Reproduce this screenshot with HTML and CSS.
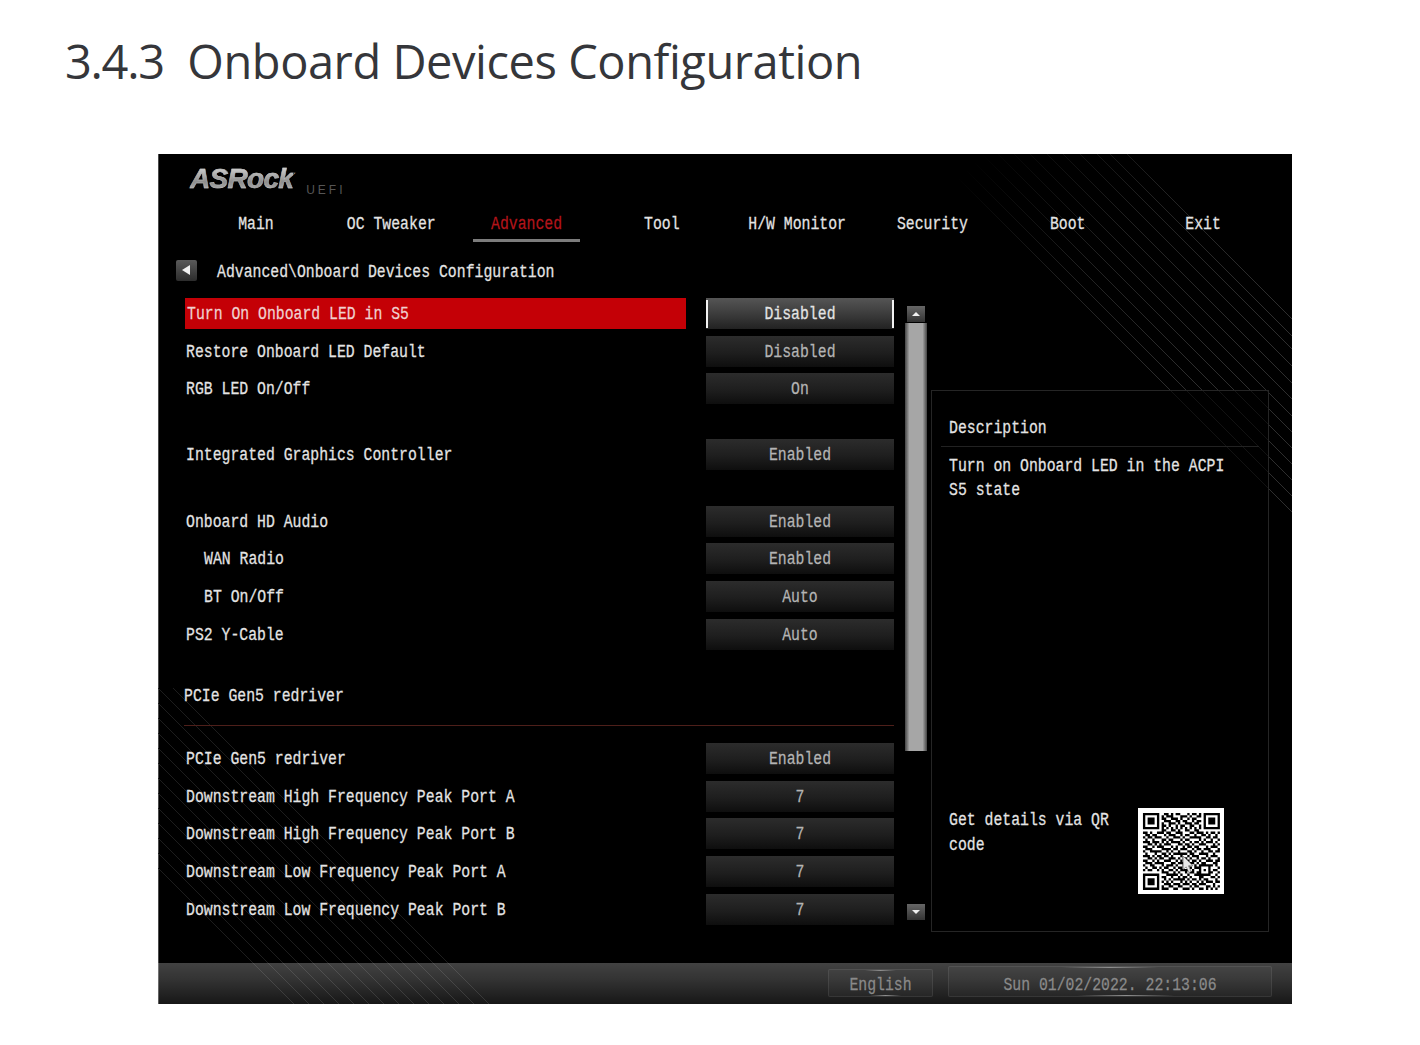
FILE: index.html
```html
<!DOCTYPE html>
<html lang="en">
<head>
    <meta charset="UTF-8">
    <title>3.4.3 Onboard Devices Configuration</title>
    <link rel="stylesheet" href="styles.css">
</head>
<body>
    <h1 class="page-title"><span class="num">3.4.3</span>&nbsp; Onboard Devices Configuration</h1>

    <div class="screen">
        <svg class="stripes" width="1134" height="850" viewBox="0 0 1134 850">
            <defs>
                <linearGradient id="fade" gradientUnits="userSpaceOnUse" x1="780" y1="40" x2="1000" y2="260">
                    <stop offset="0" stop-color="#000"/>
                    <stop offset="0.5" stop-color="#222"/>
                    <stop offset="1" stop-color="#2e2e2e"/>
                </linearGradient>
            </defs>
            <g stroke="url(#fade)" stroke-width="1" fill="none">
                <path d="M969 0L1134 165"/>
                <path d="M952 0L1134 182"/>
                <path d="M939 0L1134 195"/>
                <path d="M922 0L1134 212"/>
                <path d="M905 0L1134 229"/>
                <path d="M889 0L1134 245"/>
                <path d="M872 0L1134 262"/>
                <path d="M856 0L1134 278"/>
                <path d="M840 0L1134 294"/>
                <path d="M824 0L1134 310"/>
                <path d="M808 0L1134 326"/>
                <path d="M792 0L1134 342"/>
                <path d="M776 0L1134 358"/>
            </g>
            <g stroke="#1d1d1d" stroke-width="1" fill="none">
                <path d="M15 534L331 850"/>
                <path d="M0 534L316 850"/>
                <path d="M0 549L301 850"/>
                <path d="M0 564L286 850"/>
                <path d="M0 579L271 850"/>
                <path d="M0 594L256 850"/>
                <path d="M0 609L241 850"/>
                <path d="M0 624L226 850"/>
                <path d="M0 639L211 850"/>
                <path d="M0 654L196 850"/>
                <path d="M0 669L181 850"/>
                <path d="M0 684L166 850"/>
                <path d="M0 699L151 850"/>
                <path d="M0 714L136 850"/>
            </g>
        </svg>

        <div class="brand">
            <span class="logo">ASRock</span>
            <span class="uefi">UEFI</span>
        </div>

        <nav class="tabs">
            <span class="tab"><span class="txt">Main</span></span>
            <span class="tab"><span class="txt">OC Tweaker</span></span>
            <span class="tab active"><span class="txt">Advanced</span></span>
            <span class="tab"><span class="txt">Tool</span></span>
            <span class="tab"><span class="txt">H/W Monitor</span></span>
            <span class="tab"><span class="txt">Security</span></span>
            <span class="tab"><span class="txt">Boot</span></span>
            <span class="tab"><span class="txt">Exit</span></span>
        </nav>

        <div class="crumb">
            <span class="back"></span>
            <span class="txt">Advanced\Onboard Devices Configuration</span>
        </div>

        <div class="body">
            <div class="list">
                <div class="row selected"><span class="label"><span class="txt">Turn On Onboard LED in S5</span></span><span class="value"><span class="txt">Disabled</span></span></div>
                <div class="row"><span class="label"><span class="txt">Restore Onboard LED Default</span></span><span class="value"><span class="txt">Disabled</span></span></div>
                <div class="row"><span class="label"><span class="txt">RGB LED On/Off</span></span><span class="value"><span class="txt">On</span></span></div>
                <div class="row spaced"><span class="label"><span class="txt">Integrated Graphics Controller</span></span><span class="value"><span class="txt">Enabled</span></span></div>
                <div class="row spaced"><span class="label"><span class="txt">Onboard HD Audio</span></span><span class="value"><span class="txt">Enabled</span></span></div>
                <div class="row sub"><span class="label"><span class="txt">WAN Radio</span></span><span class="value"><span class="txt">Enabled</span></span></div>
                <div class="row sub"><span class="label"><span class="txt">BT On/Off</span></span><span class="value"><span class="txt">Auto</span></span></div>
                <div class="row"><span class="label"><span class="txt">PS2 Y-Cable</span></span><span class="value"><span class="txt">Auto</span></span></div>
                <div class="section"><span class="txt">PCIe Gen5 redriver</span></div>
                <div class="row"><span class="label"><span class="txt">PCIe Gen5 redriver</span></span><span class="value"><span class="txt">Enabled</span></span></div>
                <div class="row"><span class="label"><span class="txt">Downstream High Frequency Peak Port A</span></span><span class="value"><span class="txt">7</span></span></div>
                <div class="row"><span class="label"><span class="txt">Downstream High Frequency Peak Port B</span></span><span class="value"><span class="txt">7</span></span></div>
                <div class="row"><span class="label"><span class="txt">Downstream Low Frequency Peak Port A</span></span><span class="value"><span class="txt">7</span></span></div>
                <div class="row"><span class="label"><span class="txt">Downstream Low Frequency Peak Port B</span></span><span class="value"><span class="txt">7</span></span></div>
            </div>

            <div class="scrollbar">
                <span class="arrow up"></span>
                <span class="thumb"></span>
                <span class="arrow down"></span>
            </div>

            <aside class="desc">
                <div class="desc-title"><span class="txt">Description</span></div>
                <p class="desc-text"><span class="txt">Turn on Onboard LED in the ACPI<br>S5 state</span></p>
                <div class="qr-box">
                    <p class="qr-text"><span class="txt">Get details via QR<br>code</span></p>
                    <svg class="qr" id="qr" width="86" height="86" viewBox="0 0 33 33"></svg>
                </div>
            </aside>
        </div>

        <footer class="status">
            <span class="chip lang"><span class="txt">English</span></span>
            <span class="chip clock"><span class="txt">Sun 01/02/2022. 22:13:06</span></span>
        </footer>
    </div>

    <script src="qr.js"></script>
</body>
</html>
```

FILE: styles.css
```css
body {
    margin: 0;
    background: #fff;
    font-family: "Liberation Mono", monospace;
}
.page-title {
    margin: 0;
    padding: 30px 0 0 65px;
    height: 154px;
    box-sizing: border-box;
    font-family: "Open Sans", sans-serif;
    font-weight: 400;
    font-size: 47px;
    line-height: 62px;
    letter-spacing: -0.45px;
    color: #35363a;
    white-space: nowrap;
}
.page-title .num {
    letter-spacing: -1.3px;
}
.screen {
    position: relative;
    margin-left: 158px;
    width: 1134px;
    height: 850px;
    background: #000;
    box-shadow: inset 1px 0 0 #4a4a4a;
    color: #e4e4e4;
    font-size: 14.8px;
    overflow: hidden;
}
.stripes {
    position: absolute;
    left: 0;
    top: 0;
}
.txt {
    display: inline-block;
    transform: translateY(1.5px) scaleY(1.28);
    white-space: nowrap;
    -webkit-text-stroke: 0.2px currentColor;
}
.brand {
    position: relative;
    height: 50px;
    padding: 10px 0 0 32px;
    box-sizing: border-box;
    display: flex;
    align-items: flex-start;
}
.logo {
    font-family: "Liberation Sans", sans-serif;
    font-weight: bold;
    font-style: italic;
    font-size: 28px;
    line-height: 30px;
    letter-spacing: -0.7px;
    background: linear-gradient(180deg, #e0e0e0 0%, #8d8d8d 60%, #c0c0c0 100%);
    -webkit-background-clip: text;
    background-clip: text;
    color: transparent;
    -webkit-text-stroke: 0.5px rgba(200, 200, 200, 0.8);
}
.uefi {
    margin: 19px 0 0 13px;
    font-family: "Liberation Sans", sans-serif;
    font-size: 12px;
    line-height: 14px;
    letter-spacing: 3px;
    color: #555;
}
.tabs {
    position: relative;
    display: flex;
    height: 38px;
    padding-left: 30.3px;
}
.tab {
    width: 135.3px;
    display: flex;
    flex-direction: column;
    align-items: center;
    line-height: 36px;
}
.tab.active {
    color: #b3141a;
}
.tab.active::after {
    content: "";
    width: 107px;
    height: 3px;
    margin-top: -1px;
    background: #7c7c7c;
}
.crumb {
    position: relative;
    display: flex;
    align-items: center;
    height: 56px;
    padding-left: 18px;
    gap: 20px;
}
.back {
    width: 21px;
    height: 21px;
    border-radius: 2px;
    background: linear-gradient(180deg, #5a5a5a, #2c2c2c);
    position: relative;
}
.back::after {
    content: "";
    position: absolute;
    left: 6px;
    top: 5px;
    border: 5.5px solid transparent;
    border-left: 0;
    border-right: 8px solid #f2f2f2;
}
.body {
    position: relative;
    display: flex;
    align-items: flex-start;
    padding-left: 27px;
}
.list {
    flex: none;
    width: 709px;
    display: flex;
    flex-direction: column;
    gap: 6.7px;
}
.row {
    display: flex;
    justify-content: space-between;
    height: 31px;
    line-height: 31px;
}
.row.spaced {
    margin-top: 28.4px;
}
.row.sub .label {
    padding-left: 19px;
}
.label {
    width: 501px;
    padding-left: 1px;
    box-sizing: border-box;
}
.value {
    width: 188px;
    text-align: center;
    color: #b4b4b4;
    background: linear-gradient(180deg, #2c2c2c 0%, #1e1e1e 55%, #0e0e0e 100%);
}
.row.selected .label {
    padding-left: 2px;
    background: #c40006;
    color: #f0d0d0;
}
.row.selected .value {
    color: #e4e4e4;
    background:
        linear-gradient(#f2f2f2, #f2f2f2) left center / 2px 28px no-repeat,
        linear-gradient(#f2f2f2, #f2f2f2) right center / 2px 28px no-repeat,
        linear-gradient(180deg, #555 0%, #3a3a3a 55%, #222 100%);
}
.section {
    height: 44.5px;
    line-height: 31px;
    margin-top: 24px;
    margin-left: -1px;
    border-bottom: 1px solid #4e1f1a;
}
.section + .row {
    margin-top: 10.4px;
}
.scrollbar {
    flex: none;
    width: 22px;
    margin: 8px 0 0 11px;
    display: flex;
    flex-direction: column;
    align-items: center;
}
.arrow {
    width: 18px;
    height: 16px;
    background: linear-gradient(180deg, #666, #333);
    position: relative;
}
.arrow::after {
    content: "";
    position: absolute;
    left: 5px;
    top: 6px;
    border: 4px solid transparent;
    border-top: 0;
    border-bottom: 4px solid #f0f0f0;
}
.arrow.up {
    margin-bottom: 1px;
}
.arrow.down {
    margin-top: 153px;
}
.arrow.down::after {
    border-bottom: 0;
    border-top: 4px solid #f0f0f0;
}
.thumb {
    width: 22px;
    height: 428px;
    background: linear-gradient(90deg, #444, #a6a6a6 20%, #a6a6a6 80%, #444);
}
.desc {
    position: relative;
    flex: none;
    box-sizing: border-box;
    width: 338px;
    height: 542px;
    margin: 92px 0 0 4px;
    padding: 21px 17px 0;
    border: 1px solid #252525;
    background: rgba(0, 0, 0, 0.6);
}
.desc-title {
    height: 34px;
    line-height: 28px;
    border-bottom: 1px solid #222;
    margin: 0 -8px;
    padding-left: 8px;
}
.desc-text {
    margin: 11px 0 0;
    line-height: 18.75px;
}
.qr-box {
    position: absolute;
    left: 17px;
    right: 44px;
    top: 417px;
    display: flex;
    justify-content: space-between;
}
.qr-text {
    margin: 4px 0 0;
    line-height: 19.5px;
}
.qr {
    background: #fff;
    filter: blur(0.4px);
}
.status {
    position: absolute;
    left: 0;
    right: 0;
    bottom: 0;
    height: 41px;
    display: flex;
    justify-content: flex-end;
    align-items: flex-start;
    gap: 15px;
    padding: 3px 20px 0 0;
    box-sizing: border-box;
    background: linear-gradient(180deg, rgba(255, 255, 255, 0.26) 0%, rgba(255, 255, 255, 0.2) 40%, rgba(255, 255, 255, 0.09) 100%);
}
.chip {
    text-align: center;
    color: #8a8a8a;
    border: 1px solid rgba(255, 255, 255, 0.08);
    border-radius: 2px;
    box-sizing: border-box;
    background:
        linear-gradient(90deg, transparent 35%, #8f8f8f 50%, transparent 65%) top / 100% 1px no-repeat,
        linear-gradient(90deg, transparent 40%, #8f8f8f 55%, transparent 70%) bottom / 100% 1px no-repeat,
        rgba(255, 255, 255, 0.03);
}
.chip.lang {
    width: 105px;
    height: 28px;
    margin-top: 3px;
    line-height: 26px;
}
.chip.clock {
    width: 324px;
    height: 31px;
    line-height: 32px;
}
```

FILE: qr.js
```js
// QR bitmap, one string per row
const rows = [
    "111111100110101100010110101111111",
    "100000101011100011101001101000001",
    "101110101100111010010110001011101",
    "101110100111001101100101101011101",
    "101110101001110100111011001011101",
    "100000101101001011001100101000001",
    "111111101010101010101010101111111",
    "000000001100110100110011000000000",
    "110100111011001110001101110101101",
    "011011000101110010110010011010010",
    "101101110010011101001111100110110",
    "010010001101100010110000101001001",
    "111011101010111101001011010111010",
    "001101010111000110110100111000101",
    "110010111000101001011011000101110",
    "011100001111011011100101101110001",
    "100111110010100100011010010011011",
    "010001001101011111101100111100100",
    "111010110110100010010111000101110",
    "001101011001110101101001011010001",
    "110010100111001010110110100111011",
    "011101111000110111001101011000110",
    "100110001011101001110010111111010",
    "010011010110010110001011100010001",
    "101100101001101011110100101010110",
    "000000001110010100101101100011001",
    "111111100011111010010011111110010",
    "100000101100100101101000110001101",
    "101110100101011111010110101100010",
    "101110101010100010101001010111011",
    "101110100111011101110110111000100",
    "100000101001100110001011000110101",
    "111111101110011001110100110101010"
];

const qr = document.getElementById('qr');
let d = '';
rows.forEach(function(row, y) {
    for (let x = 0; x < row.length; x++) {
        if (row[x] === '1') {
            d += 'M' + x + ' ' + y + 'h1v1h-1z';
        }
    }
});
// modules, then the mouse pointer lying on top of the code
qr.innerHTML = '<path fill="#000" transform="translate(1.9 1.9) scale(0.895)" d="' + d + '"/>'
    + '<path fill="#e8e8e8" stroke="#444" stroke-width="0.2" d="M17.3 18.4v5.2l1.2-1 1 2.2 .9-.4-1-2.2h1.7z"/>';
```
